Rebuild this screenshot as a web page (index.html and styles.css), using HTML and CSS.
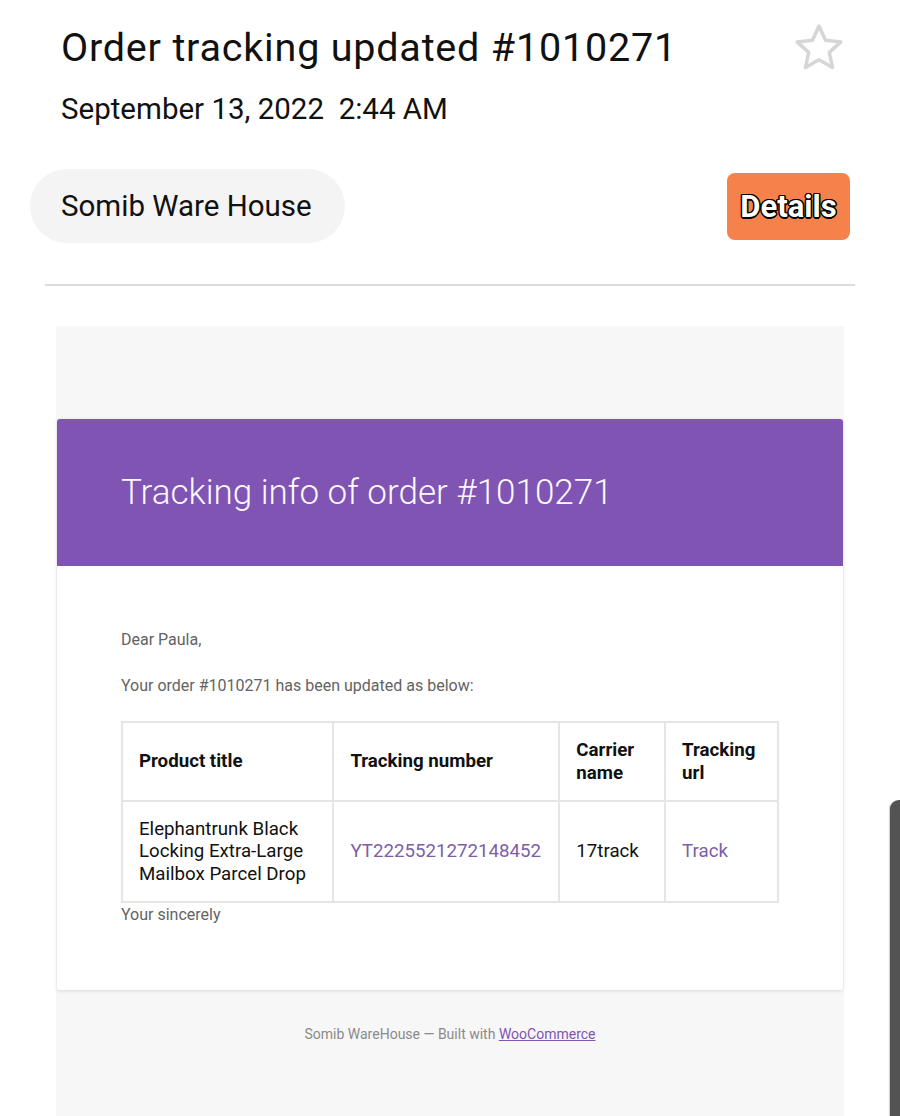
FILE: index.html
```html
<!DOCTYPE html>
<html>
<head>
<meta charset="utf-8">
<link rel="stylesheet" href="styles.css">
</head>
<body>
<div class="page">
  <header class="mail-head">
    <div class="title-row">
      <h1 class="subject">Order tracking updated #1010271</h1>
      <svg class="star" width="52" height="52" viewBox="0 0 52 52" aria-hidden="true">
        <path d="M26 4 L32.5 18.3 L47.9 19.9 L36.3 30.4 L39.5 45.6 L26 37.8 L12.5 45.6 L15.7 30.4 L4.1 19.9 L19.5 18.3 Z" fill="none" stroke="#d6d6d6" stroke-width="3.5" stroke-linejoin="round"/>
      </svg>
    </div>
    <div class="date">September 13, 2022&nbsp; 2:44 AM</div>
    <div class="sender-row">
      <div class="sender">Somib Ware House</div>
      <div class="details">Details</div>
    </div>
  </header>
  <hr class="divider">
  <div class="mail-bg">
    <div class="card">
      <div class="card-head">Tracking info of order #1010271</div>
      <div class="card-body">
        <p class="txt">Dear Paula,</p>
        <p class="txt gap">Your order #1010271 has been updated as below:</p>
        <table class="track">
          <thead>
            <tr>
              <th class="c1">Product title</th>
              <th class="c2">Tracking number</th>
              <th class="c3">Carrier name</th>
              <th class="c4">Tracking url</th>
            </tr>
          </thead>
          <tbody>
            <tr>
              <td>Elephantrunk Black Locking Extra-Large Mailbox Parcel Drop</td>
              <td><span class="link nowrap">YT2225521272148452</span></td>
              <td>17track</td>
              <td><span class="link">Track</span></td>
            </tr>
          </tbody>
        </table>
        <p class="txt">Your sincerely</p>
      </div>
    </div>
    <div class="footer">Somib WareHouse — Built with <span class="flink">WooCommerce</span></div>
  </div>
  <div class="scroll-thumb"></div>
</div>
</body>
</html>
```

FILE: styles.css
```css
html, body {
  margin: 0;
  padding: 0;
  background: #ffffff;
}
body {
  font-family: Roboto, "Noto Sans", sans-serif;
  color: #111;
  overflow: hidden;
}
.page {
  position: relative;
  width: 900px;
  height: 1116px;
  overflow: hidden;
}
.mail-head {
  padding: 24px 50px 0 30px;
}
.title-row {
  display: flex;
  justify-content: space-between;
  align-items: center;
  height: 48px;
  padding-left: 31px;
  padding-right: 5px;
}
.subject {
  margin: 0;
  font-weight: 400;
  font-size: 39.5px;
  line-height: 48px;
  letter-spacing: 0.8px;
  color: #111;
}
.star {
  display: block;
  margin: -2px 0;
}
.date {
  margin-top: 19px;
  padding-left: 31px;
  font-size: 29.5px;
  line-height: 36px;
  color: #111;
}
.sender-row {
  margin-top: 42px;
  display: flex;
  justify-content: space-between;
  align-items: center;
}
.sender {
  height: 74px;
  display: flex;
  align-items: center;
  padding: 0 33px 0 31px;
  background: #f4f4f4;
  border-radius: 37px;
  font-size: 29.5px;
  color: #111;
}
.details {
  width: 123px;
  height: 67px;
  display: flex;
  align-items: center;
  justify-content: center;
  background: #f7814a;
  border-radius: 8px;
  font-size: 31px;
  font-weight: 700;
  color: #fff;
  text-shadow: -1.5px 0 #000, 1.5px 0 #000, 0 -1.5px #000, 0 1.5px #000, -1px -1px #000, 1px 1px #000, -1px 1px #000, 1px -1px #000;
}
.divider {
  margin: 41px 45px 0 45px;
  border: 0;
  height: 2px;
  background: #dcdcdc;
}
.mail-bg {
  margin: 40px 56px 0 56px;
  padding: 93px 1px 60px 1px;
  background: #f7f7f7;
  min-height: 800px;
}
.card {
  background: #fff;
  border-radius: 3px;
  box-shadow: 0 1px 4px rgba(0,0,0,0.12);
  overflow: hidden;
}
.card-head {
  height: 147px;
  display: flex;
  align-items: center;
  padding: 0 64px;
  background: #7f54b3;
  color: #fdf8ff;
  font-size: 35px;
  font-weight: 300;
}
.card-body {
  padding: 62px 64px 63px 64px;
}
.txt {
  margin: 0;
  font-size: 16px;
  line-height: 24px;
  color: #636363;
}
.gap {
  margin-top: 22px;
  margin-bottom: 23px;
}
.track {
  width: 658px;
  border-collapse: collapse;
  border: 2px solid #e5e5e5;
}
.track th, .track td {
  border: 2px solid #e5e5e5;
  padding: 16px 16px 16px 16px;
  text-align: left;
  vertical-align: middle;
  font-size: 18.7px;
  line-height: 22.5px;
  color: #111;
}
.track th {
  font-weight: 700;
  height: 45px;
}
.track td {
  font-weight: 400;
  padding-top: 15.5px;
  padding-bottom: 15.5px;
}
.c1 { width: 179px; }
.c2 { width: 192px; }
.c3 { width: 72px; }
.c4 { width: 79px; }
.link {
  color: #7d5ea7;
}
.nowrap {
  white-space: nowrap;
}
.footer {
  padding-top: 35px;
  text-align: center;
  font-size: 14px;
  line-height: 18px;
  color: #8a8a8a;
}
.flink {
  color: #7f54b3;
  text-decoration: underline;
}
.scroll-thumb {
  position: absolute;
  right: 0;
  top: 800px;
  width: 10px;
  height: 330px;
  background: #535353;
  border-top-left-radius: 9px;
  box-shadow: -1px 0 1px rgba(0,0,0,0.2);
}
```
